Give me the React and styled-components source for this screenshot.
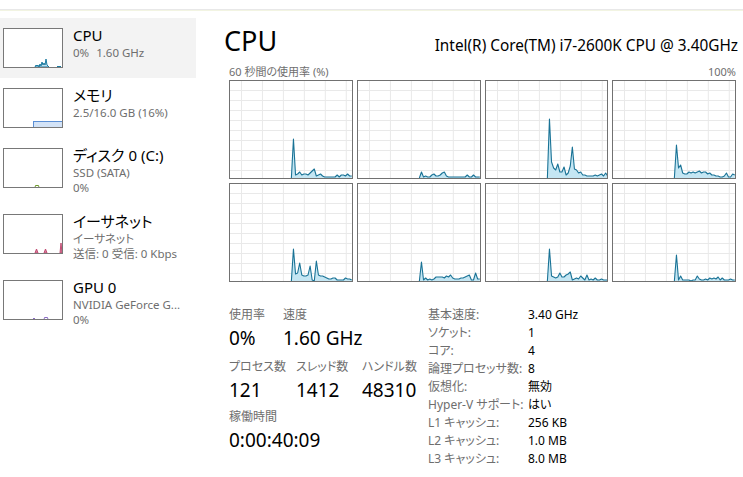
import React from "react";
import styled, { createGlobalStyle } from "styled-components";

const FONT = `"Segoe UI", "Noto Sans", "Noto Sans CJK JP", sans-serif`;

const Global = createGlobalStyle`
  html, body { margin: 0; padding: 0; background: #fff; }
  body {
    font-family: ${FONT};
    color: #000;
    font-feature-settings: "palt";
    -webkit-font-smoothing: antialiased;
  }
`;

const Window = styled.div`
  width: 743px;
  height: 477px;
  overflow: hidden;
  background: #fff;
  display: flex;
  flex-direction: column;
`;

const TopRule = styled.div`
  flex: none;
  height: 9px;
  border-bottom: 1px solid #e8e8e8;
  box-shadow: 0 1px 0 #f2f4e2;
`;

const Body = styled.div`
  flex: 1;
  display: grid;
  grid-template-columns: 196px 1fr;
  padding-top: 8px;
`;

/* ---------- Sidebar ---------- */
const Sidebar = styled.nav`
  display: flex;
  flex-direction: column;
`;

const Row = styled.div`
  display: flex;
  gap: 10px;
  box-sizing: border-box;
  min-height: 60px;
  padding: 0 0 9px 3px;
  background: ${(p) => (p.$active ? "#f3f3f3" : "transparent")};
`;

const Thumb = styled.div`
  flex: none;
  margin-top: 10px;
  width: 60px;
  height: 40px;
  box-sizing: border-box;
  border: 1px solid #787878;
  background: #fff;
  svg { display: block; }
`;

const RowText = styled.div`
  padding-top: 7px;
  display: flex;
  flex-direction: column;
  min-width: 0;
`;

const RowTitle = styled.div`
  font-size: 15px;
  line-height: 20px;
  color: #000;
  white-space: nowrap;
`;

const RowSub = styled.div`
  font-size: 11.5px;
  line-height: 15px;
  color: #6e6e6e;
  white-space: nowrap;
`;

const Gap = styled.span`
  display: inline-block;
  width: ${(p) => p.$w}px;
`;

const ThumbSvg = ({ children }) => (
  <svg width="58" height="38" viewBox="0 0 58 38">
    {children}
  </svg>
);

const spikes = (base, pts) =>
  `${pts[0][0]},${base} ` + pts.map(([x, h]) => `${x},${base - h}`).join(" ") + ` ${pts[pts.length - 1][0]},${base}`;

const CpuThumb = () => (
  <ThumbSvg>
    <polygon
      points={spikes(38, [[31, 0], [32, 2], [33, 1], [34, 2], [35, 0], [36, 3], [37, 1], [38, 5], [39, 2], [40, 4], [41, 2], [42, 8], [43, 2], [44, 1], [45, 0]])}
      fill="#bfe2f1"
      stroke="#1b7aa0"
      strokeWidth="1"
    />
    <polyline points="53,38 54,37 55,38 56,37 57,38" fill="none" stroke="#1b7aa0" strokeWidth="1" />
  </ThumbSvg>
);

const MemThumb = () => (
  <ThumbSvg>
    <rect x="29.5" y="32.5" width="29" height="6" fill="#d3e3f7" stroke="#5b8fd6" strokeWidth="1" />
  </ThumbSvg>
);

const DiskThumb = () => (
  <ThumbSvg>
    <polyline points="31,38 32,36 33,37 34,36 35,38" fill="none" stroke="#6f9a2c" strokeWidth="1" />
  </ThumbSvg>
);

const NetThumb = () => (
  <ThumbSvg>
    <polygon points="31,38 32.5,34 34,38" fill="#d98aa3" stroke="#c04b72" strokeWidth="1" />
    <polygon points="40,38 41.5,34 43,38" fill="#d98aa3" stroke="#c04b72" strokeWidth="1" />
    <polygon points="56,38 57,28 58,38" fill="#d98aa3" stroke="#c04b72" strokeWidth="1" />
  </ThumbSvg>
);

const GpuThumb = () => (
  <ThumbSvg>
    <polyline points="29,38 30,37 31,38" fill="none" stroke="#8a6cc4" strokeWidth="1" />
    <polyline points="40,38 41,36 42,37 43,36 44,38" fill="none" stroke="#8a6cc4" strokeWidth="1" />
  </ThumbSvg>
);

const sideItems = [
  { title: "CPU", subs: [<>0%<Gap $w={7} />1.60 GHz</>], thumb: <CpuThumb />, active: true },
  { title: "メモリ", subs: ["2.5/16.0 GB (16%)"], thumb: <MemThumb /> },
  { title: "ディスク 0 (C:)", subs: ["SSD (SATA)", "0%"], thumb: <DiskThumb /> },
  { title: "イーサネット", subs: ["イーサネット", "送信: 0 受信: 0 Kbps"], thumb: <NetThumb /> },
  { title: "GPU 0", subs: ["NVIDIA GeForce G...", "0%"], thumb: <GpuThumb /> },
];

/* ---------- Main ---------- */
const Main = styled.main`
  padding: 0 7px 0 33px;
  display: flex;
  flex-direction: column;
  min-width: 0;
`;

const Header = styled.header`
  display: flex;
  justify-content: space-between;
  align-items: baseline;
  margin-top: 5px;
  line-height: 36px;
`;

const Title = styled.h1`
  margin: 0 0 0 -5px;
  font-size: 27px;
  font-weight: 400;
  line-height: 36px;
`;

const Processor = styled.div`
  font-size: 15.35px;
  white-space: nowrap;
  margin-right: -2px;
`;

const Caption = styled.div`
  display: flex;
  justify-content: space-between;
  font-size: 11px;
  line-height: 14px;
  color: #6e6e6e;
  margin-top: 2px;
`;

const GraphGrid = styled.div`
  display: grid;
  grid-template-columns: repeat(4, 1fr);
  gap: 4px;
  margin-top: 1px;
`;

const GraphCell = styled.div`
  height: 99px;
  box-sizing: border-box;
  border: 1px solid #717171;
  background: #fff;
  svg { display: block; width: 100%; height: 100%; }
`;

const GW = 122;
const GH = 97;
const VLINES = [11, 32, 53, 74, 95, 116];
const HLINES = [9, 19, 29, 39, 49, 59, 69, 79, 89];

const CoreGraph = ({ data }) => {
  const x0 = 61.5;
  const step = (GW - x0) / (data.length - 1);
  const pts = data.map((v, i) => `${(x0 + i * step).toFixed(2)},${GH - v}`);
  const line = pts.join(" ");
  const area = `${x0},${GH} ${line} ${GW},${GH}`;
  return (
    <GraphCell>
      <svg viewBox={`0 0 ${GW} ${GH}`} preserveAspectRatio="none">
        {VLINES.map((x) => (
          <line key={"v" + x} x1={x + 0.5} y1="0" x2={x + 0.5} y2={GH} stroke="#e9e9e9" strokeWidth="1" />
        ))}
        {HLINES.map((y) => (
          <line key={"h" + y} x1="0" y1={y + 0.5} x2={GW} y2={y + 0.5} stroke="#e9e9e9" strokeWidth="1" />
        ))}
        <polygon points={area} fill="#c4e6f3" />
        <polyline points={line} fill="none" stroke="#1a7396" strokeWidth="1.1" strokeLinejoin="round" />
      </svg>
    </GraphCell>
  );
};

const coreData = [
  [0, 39, 3, 4, 6, 3, 4, 4, 3, 5, 7, 9, 2, 3, 4, 2, 1, 1, 1, 1, 1, 1, 3, 1, 3, 3, 2, 4, 2, 2],
  [0, 6, 1, 2, 1, 1, 3, 4, 2, 2, 3, 5, 6, 2, 1, 1, 1, 1, 1, 1, 1, 1, 1, 3, 1, 1, 3, 1, 1, 1],
  [0, 59, 16, 10, 8, 14, 6, 6, 11, 3, 5, 12, 31, 9, 8, 5, 6, 3, 3, 2, 2, 2, 2, 3, 2, 3, 4, 2, 5, 2],
  [0, 33, 10, 13, 5, 4, 4, 6, 5, 6, 5, 6, 7, 5, 6, 6, 4, 5, 3, 3, 2, 2, 1, 1, 2, 5, 1, 1, 4, 3],
  [0, 32, 7, 8, 18, 6, 5, 5, 6, 15, 1, 0, 20, 6, 5, 5, 4, 3, 2, 2, 3, 3, 1, 1, 1, 1, 3, 2, 2, 1],
  [0, 19, 1, 3, 1, 2, 1, 2, 4, 4, 4, 4, 3, 5, 4, 6, 3, 2, 2, 2, 3, 3, 4, 5, 6, 1, 1, 8, 2, 2],
  [0, 32, 5, 4, 3, 4, 8, 4, 4, 6, 7, 9, 1, 2, 3, 2, 5, 3, 1, 6, 1, 2, 1, 3, 1, 1, 2, 1, 1, 1],
  [0, 26, 1, 5, 1, 1, 1, 1, 0, 1, 1, 5, 2, 1, 1, 2, 1, 3, 2, 3, 2, 4, 1, 3, 1, 1, 1, 2, 1, 1],
];

/* ---------- Stats ---------- */
const Stats = styled.section`
  display: flex;
  margin-top: 25px;
`;

const StatsLeft = styled.div`
  width: 199px;
  flex: none;
  display: flex;
  flex-direction: column;
`;

const StatRow = styled.div`
  display: flex;
  margin-top: ${(p) => p.$mt || 0}px;
`;

const Stat = styled.div`
  width: ${(p) => (p.$w ? `${p.$w}px` : "auto")};
  flex: none;
  display: flex;
  flex-direction: column;
  gap: 3px;
`;

const StatLabel = styled.div`
  font-size: 12px;
  line-height: 16px;
  color: #6e6e6e;
  white-space: nowrap;
`;

const StatValue = styled.div`
  font-size: 19px;
  line-height: 24px;
  color: #000;
  white-space: nowrap;
`;

const Specs = styled.dl`
  margin: -2px 0 0 0;
  display: grid;
  grid-template-columns: 100px auto;
  grid-auto-rows: 18px;
  align-items: center;
  font-size: 12px;
`;

const SpecKey = styled.dt`
  color: #6e6e6e;
  white-space: nowrap;
`;

const SpecVal = styled.dd`
  margin: 0;
  color: #000;
  white-space: nowrap;
`;

const specs = [
  ["基本速度:", "3.40 GHz"],
  ["ソケット:", "1"],
  ["コア:", "4"],
  ["論理プロセッサ数:", "8"],
  ["仮想化:", "無効"],
  ["Hyper-V サポート:", "はい"],
  ["L1 キャッシュ:", "256 KB"],
  ["L2 キャッシュ:", "1.0 MB"],
  ["L3 キャッシュ:", "8.0 MB"],
];

export default function App() {
  return (
    <Window>
      <Global />
      <TopRule />
      <Body>
        <Sidebar>
          {sideItems.map((it, i) => (
            <Row key={i} $active={it.active}>
              <Thumb>{it.thumb}</Thumb>
              <RowText>
                <RowTitle>{it.title}</RowTitle>
                {it.subs.map((s, j) => (
                  <RowSub key={j}>{s}</RowSub>
                ))}
              </RowText>
            </Row>
          ))}
        </Sidebar>
        <Main>
          <Header>
            <Title>CPU</Title>
            <Processor>Intel(R) Core(TM) i7-2600K CPU @ 3.40GHz</Processor>
          </Header>
          <Caption>
            <span>60 秒間の使用率 (%)</span>
            <span>100%</span>
          </Caption>
          <GraphGrid>
            {coreData.map((d, i) => (
              <CoreGraph key={i} data={d} />
            ))}
          </GraphGrid>
          <Stats>
            <StatsLeft>
              <StatRow>
                <Stat $w={54}>
                  <StatLabel>使用率</StatLabel>
                  <StatValue>0%</StatValue>
                </Stat>
                <Stat>
                  <StatLabel>速度</StatLabel>
                  <StatValue>1.60 GHz</StatValue>
                </Stat>
              </StatRow>
              <StatRow $mt={9}>
                <Stat $w={67}>
                  <StatLabel>プロセス数</StatLabel>
                  <StatValue>121</StatValue>
                </Stat>
                <Stat $w={66}>
                  <StatLabel>スレッド数</StatLabel>
                  <StatValue>1412</StatValue>
                </Stat>
                <Stat>
                  <StatLabel>ハンドル数</StatLabel>
                  <StatValue>48310</StatValue>
                </Stat>
              </StatRow>
              <StatRow $mt={7}>
                <Stat>
                  <StatLabel>稼働時間</StatLabel>
                  <StatValue>0:00:40:09</StatValue>
                </Stat>
              </StatRow>
            </StatsLeft>
            <Specs>
              {specs.map(([k, v]) => (
                <React.Fragment key={k}>
                  <SpecKey>{k}</SpecKey>
                  <SpecVal>{v}</SpecVal>
                </React.Fragment>
              ))}
            </Specs>
          </Stats>
        </Main>
      </Body>
    </Window>
  );
}
